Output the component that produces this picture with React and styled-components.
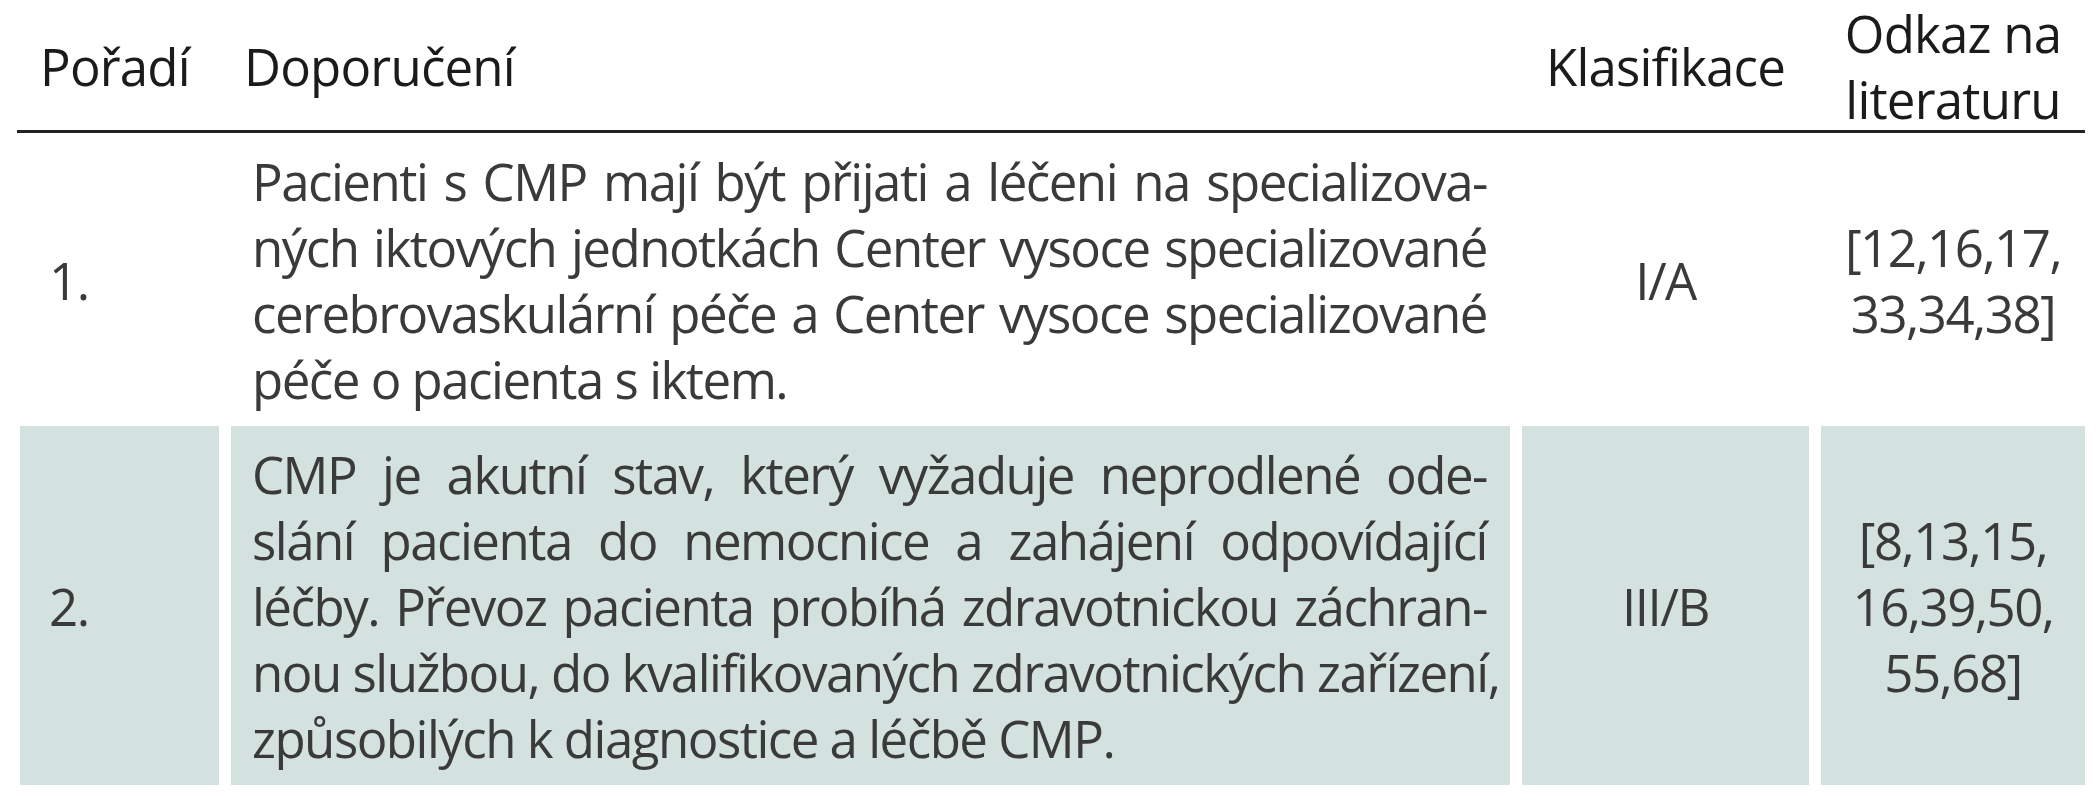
import styled, { createGlobalStyle } from 'styled-components';

const Global = createGlobalStyle`
  body {
    margin: 0;
    background: #fff;
    font-family: "Open Sans", "Noto Sans", sans-serif;
  }
`;

const cols = '199px 1279px 287px 264px';

const Table = styled.div`
  width: 2065px;
  margin-left: 20px;
  font-size: 51px;
  line-height: 66px;
`;

const HeadRow = styled.div`
  display: grid;
  grid-template-columns: ${cols};
  column-gap: 12px;
  height: 130px;
  margin-left: -3px;
  padding-left: 3px;
  border-bottom: 3px solid #222;
  color: #1b1b1b;
  font-weight: 500;
  letter-spacing: -0.8px;
`;

const HeadCell = styled.div`
  display: flex;
  flex-direction: column;
  justify-content: center;
  align-items: ${(p) => (p.$center ? 'center' : 'flex-start')};
  padding-left: ${(p) => (p.$center ? 0 : p.$pad)}px;
  padding-bottom: 8px;
  white-space: nowrap;
`;

const Row = styled.div`
  display: grid;
  grid-template-columns: ${cols};
  column-gap: 12px;
  color: #3a3a3a;
  letter-spacing: -1.5px;
`;

const Cell = styled.div`
  display: flex;
  flex-direction: column;
  justify-content: center;
  align-items: ${(p) => (p.$center ? 'center' : 'stretch')};
  padding: 15px ${(p) => (p.$center ? 0 : 23)}px 14px ${(p) => (p.$center ? 0 : p.$pad ?? 21)}px;
  background: ${(p) => (p.$shade ? '#d3e2de' : 'transparent')};
`;

const Line = styled.span`
  display: block;
  white-space: nowrap;
  text-align: ${(p) => (p.$last ? 'left' : 'justify')};
  text-align-last: ${(p) => (p.$last ? 'left' : 'justify')};
`;

const Plain = styled.span`
  display: block;
  white-space: nowrap;
`;

const rows = [
  {
    n: '1.',
    text: [
      'Pacienti s CMP mají být přijati a léčeni na specializova-',
      'ných iktových jednotkách Center vysoce specializované',
      'cerebrovaskulární péče a Center vysoce specializované',
      'péče o pacienta s iktem.',
    ],
    cls: 'I/A',
    refs: ['[12,16,17,', '33,34,38]'],
  },
  {
    n: '2.',
    text: [
      'CMP je akutní stav, který vyžaduje neprodlené ode-',
      'slání pacienta do nemocnice a zahájení odpovídající',
      'léčby. Převoz pacienta probíhá zdravotnickou záchran-',
      'nou službou, do kvalifikovaných zdravotnických zařízení,',
      'způsobilých k diagnostice a léčbě CMP.',
    ],
    cls: 'III/B',
    refs: ['[8,13,15,', '16,39,50,', '55,68]'],
    shade: true,
  },
];

export default function App() {
  return (
    <>
      <Global />
      <Table>
        <HeadRow>
          <HeadCell $pad={20}>Pořadí</HeadCell>
          <HeadCell $pad={13}>Doporučení</HeadCell>
          <HeadCell $center>Klasifikace</HeadCell>
          <HeadCell $center>
            <Plain>Odkaz na</Plain>
            <Plain>literaturu</Plain>
          </HeadCell>
        </HeadRow>
        {rows.map((r) => (
          <Row key={r.n}>
            <Cell $shade={r.shade} $pad={29}>
              {r.n}
            </Cell>
            <Cell $shade={r.shade}>
              {r.text.map((t, i) => (
                <Line key={i} $last={i === r.text.length - 1}>
                  {t}
                </Line>
              ))}
            </Cell>
            <Cell $shade={r.shade} $center>
              {r.cls}
            </Cell>
            <Cell $shade={r.shade} $center>
              {r.refs.map((t) => (
                <Plain key={t}>{t}</Plain>
              ))}
            </Cell>
          </Row>
        ))}
      </Table>
    </>
  );
}
